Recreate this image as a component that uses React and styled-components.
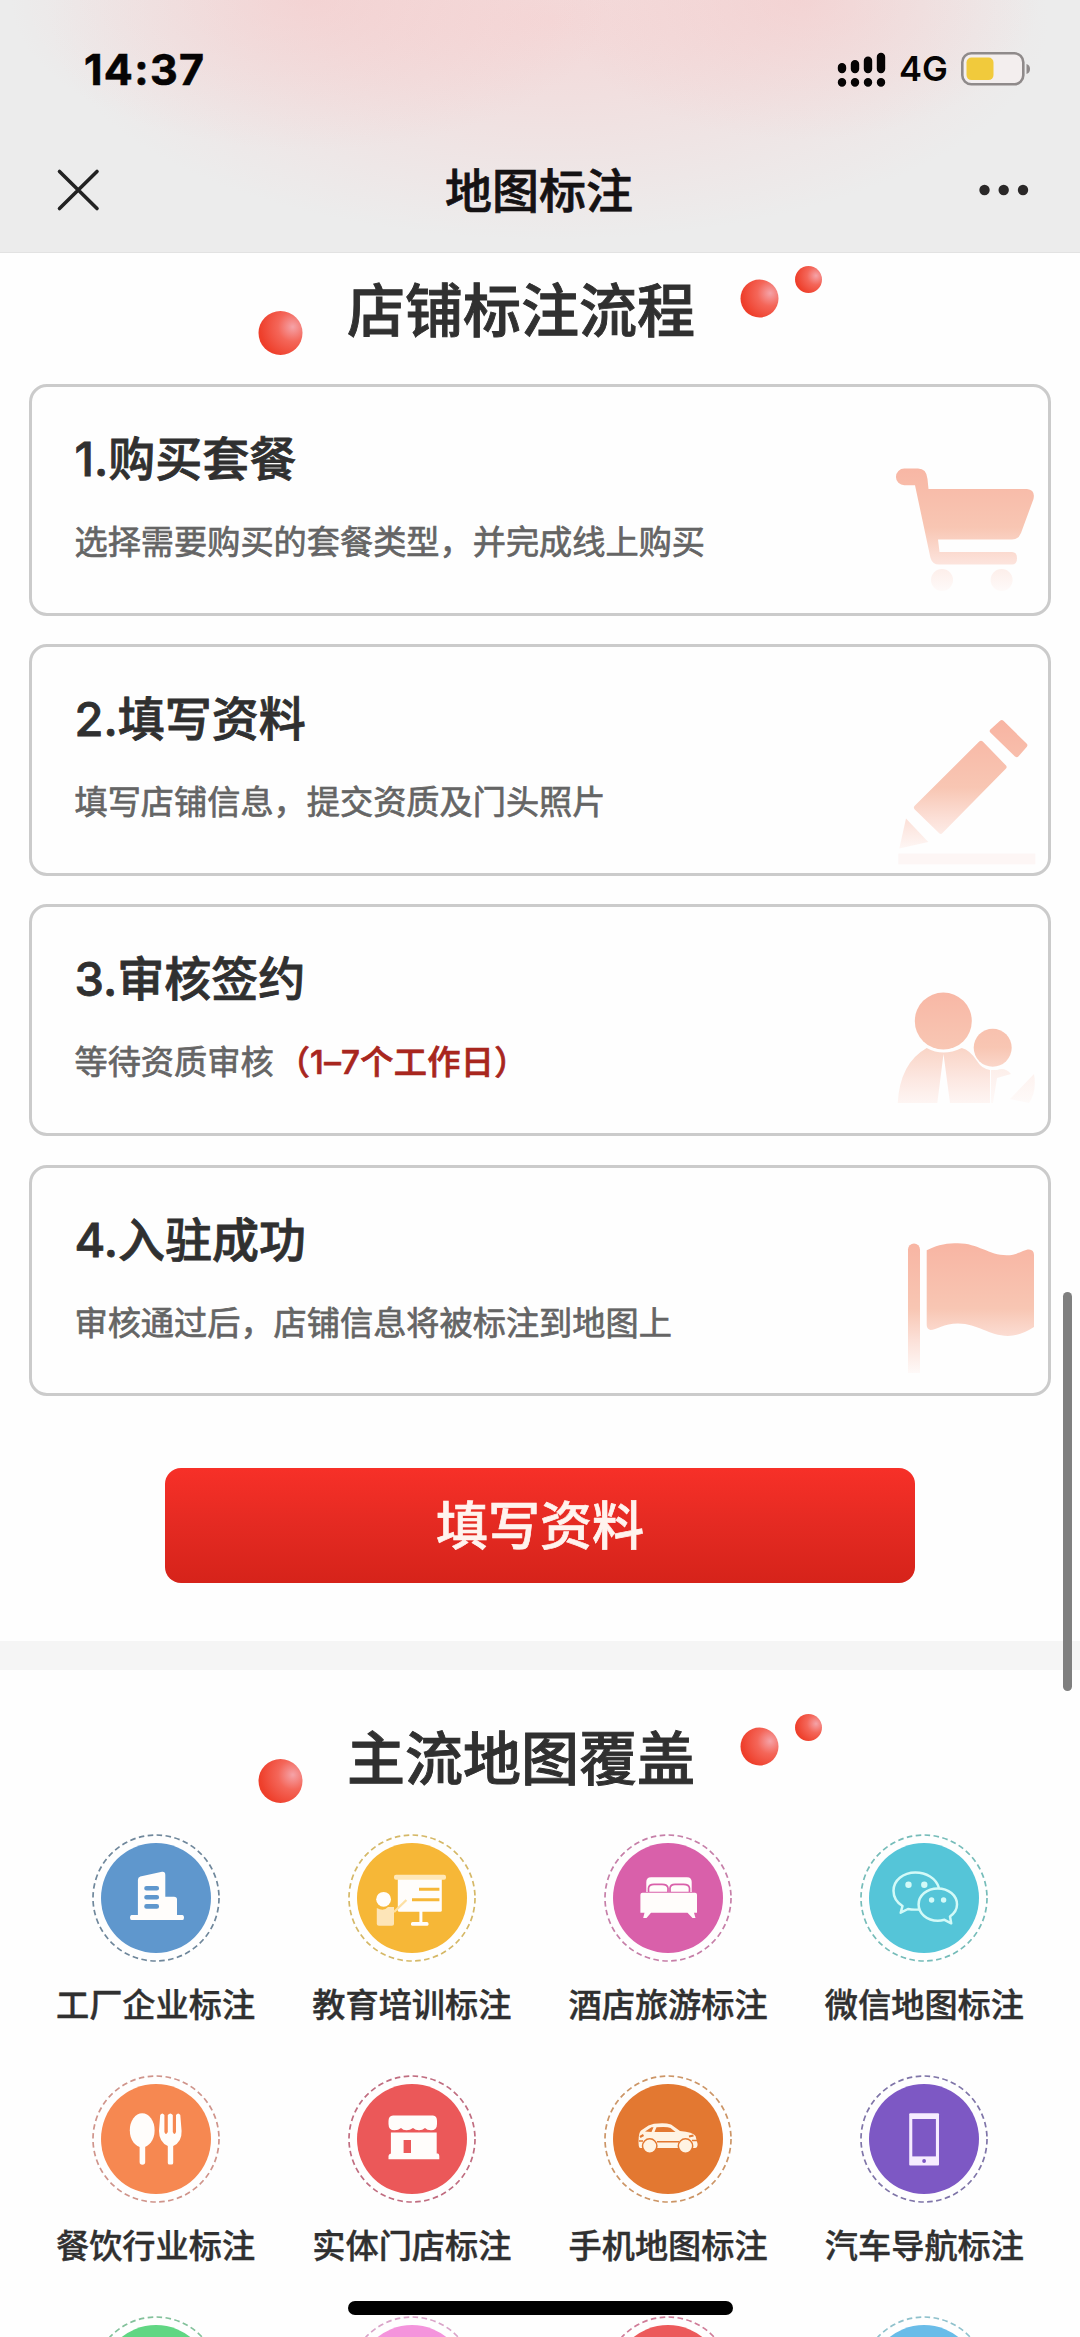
import React from 'react';
import styled, { createGlobalStyle } from 'styled-components';

const GlobalStyle = createGlobalStyle`
  * {
    box-sizing: border-box;
  }

  body {
    margin: 0;
    background: #fefefe;
    font-family: Inter, 'Noto Sans CJK SC', sans-serif;
    font-weight: 500;
    color: #303030;
  }
`;

const Page = styled.div`
  position: relative;
  width: 1080px;
  height: 2337px;
  overflow: hidden;
`;

const Header = styled.header`
  height: 253px;
  border-bottom: 1px solid #e2e2e2;
  background:
    radial-gradient(ellipse 300px 150px at 310px 0, rgba(248, 190, 190, 0.4), transparent),
    radial-gradient(ellipse 240px 140px at 800px 0, rgba(248, 190, 190, 0.4), transparent),
    radial-gradient(ellipse 500px 220px at 550px 20px, rgba(248, 205, 205, 0.65), transparent),
    #ececec;
`;

const StatusBar = styled.div`
  display: flex;
  align-items: center;
  justify-content: space-between;
  height: 137px;
  padding: 0 49px 0 84px;
  color: #060404;
`;

const Time = styled.span`
  font-size: 43px;
  font-weight: 700;
  line-height: 50px;
  letter-spacing: 1.3px;
  -webkit-text-stroke: 0.6px currentColor;
`;

const StatusIcons = styled.div`
  display: flex;
  align-items: center;
  gap: 12px;
`;

const Network = styled.span`
  width: 50px;
  font-size: 34.5px;
  font-weight: 600;
  line-height: 40px;
`;

const NavBar = styled.nav`
  display: grid;
  grid-template-columns: 60px 1fr 60px;
  align-items: center;
  height: 106px;
  padding: 0 47px 0 48px;

  svg:last-child {
    justify-self: end;
  }
`;

const NavTitle = styled.h1`
  margin: 1px 3px 0 0;
  font-size: 47px;
  font-weight: 500;
  line-height: 60px;
  text-align: center;
  color: #151213;
  -webkit-text-stroke: 0.7px currentColor;
`;

const Section = styled.section`
  padding-top: ${({ top }) => top}px;
`;

const TitleRow = styled.div`
  display: flex;
  align-items: flex-start;
  gap: 41px;
  height: 118px;
  padding-left: 258px;
`;

const LeftBall = styled.svg`
  margin-top: 45px;
`;

const SectionTitle = styled.h2`
  margin: 6px 0 0;
  width: 352px;
  font-size: 58px;
  font-weight: 500;
  line-height: 78px;
  text-align: center;
  white-space: nowrap;
  -webkit-text-stroke: 0.9px currentColor;
`;

const Steps = styled.div`
  display: flex;
  flex-direction: column;
  gap: 28.6px;
  padding: 0 29px;
`;

const StepCard = styled.div`
  display: flex;
  justify-content: space-between;
  height: 231.6px;
  border: 3px solid #cbcbcb;
  border-radius: 18px;

  svg {
    flex: none;
  }
`;

const StepText = styled.div`
  padding: 39px 0 0 42.5px;
`;

const StepTitle = styled.h3`
  margin: 0;
  font-size: 47px;
  font-weight: 500;
  line-height: 66px;
  -webkit-text-stroke: 0.8px currentColor;
`;

const StepDesc = styled.p`
  margin: 26px 0 0;
  font-size: 33.2px;
  font-weight: 400;
  line-height: 48px;
  color: #656565;
  -webkit-text-stroke: 0.7px currentColor;
`;

const Highlight = styled.span`
  margin-left: 3px;
  font-weight: 500;
  letter-spacing: 0.3px;
  color: #a8261e;
`;

const SubmitButton = styled.button`
  display: block;
  width: 750px;
  height: 115px;
  margin: 72px auto 58px;
  padding: 0 0 7px;
  border: 0;
  border-radius: 16px;
  background: linear-gradient(#f73028, #e42a22 50%, #d6231a);
  font-family: inherit;
  font-size: 52px;
  font-weight: 500;
  color: #fff3ee;
  -webkit-text-stroke: 0.7px currentColor;
`;

const Divider = styled.div`
  height: 29px;
  background: #f5f5f5;
`;

const CategoryGrid = styled.div`
  display: grid;
  grid-template-columns: repeat(4, 256.3px);
  grid-auto-rows: 240.8px;
  padding: 2px 0 0 27.4px;
`;

const Category = styled.div`
  display: flex;
  flex-direction: column;
  align-items: center;
`;

const CategoryName = styled.span`
  margin-top: 19px;
  font-size: 33.2px;
  line-height: 48px;
  white-space: nowrap;
  -webkit-text-stroke: 0.4px currentColor;
`;

const ScrollThumb = styled.div`
  position: absolute;
  top: 1292px;
  right: 8px;
  width: 9px;
  height: 399px;
  border-radius: 5px;
  background: #7f7f7f;
`;

const HomeIndicator = styled.div`
  position: absolute;
  bottom: 22px;
  left: 348px;
  width: 385px;
  height: 14px;
  border-radius: 7px;
  background: #000;
`;

const CartIcon = () => (
  <>
    <path d='M16.3 81.6 H30 Q38.5 81.6 39.5 92 L40.5 102 H139 Q147.5 103 145.5 112 L133 146 Q130.5 152.6 124 152.6 H50 L51.5 165 H124 Q129 165 129 171.3 T124 177.6 H51 Q44.5 177.6 42.5 171 L27 98.3 H16.3 A8.3 8.3 0 0 1 16.3 81.6Z' />
    <circle cx='54' cy='193' r='11' opacity='0.7' />
    <circle cx='113.6' cy='193' r='11' opacity='0.7' />
  </>
);

const PencilIcon = () => (
  <>
    <g strokeWidth='5' strokeLinejoin='round' stroke='url(#fade)'>
      <path d='M113.7 75.6 L136.8 98.3 L128.7 107.6 L104.3 84Z' />
      <path d='M93 96.3 L116 120 L52.7 184.3 L28.5 160.6Z' />
    </g>
    <path d='M18 171.6 L40.3 195 L11.3 201.6Z' />
    <rect x='10.3' y='206.6' width='137' height='10.7' fill='#fdf6f5' />
  </>
);

const PeopleIcon = () => (
  <>
    <circle cx='55.3' cy='114' r='28.5' />
    <circle cx='104.7' cy='140.7' r='19' />
    <path
      d='M38.7 141 Q55 150 73.7 141 Q82 143 89 154 Q94 162 102 163 V196 H62 L55.5 147 L49.3 196 H9.7 Q12 156 38.7 141Z'
      opacity='0.75'
    />
    <path d='M109 163 Q117 160 123 167 L109 171 L105 196 H103 V163Z' opacity='0.4' />
    <path d='M146 167 Q149 184 141 196 L122 192 Z' opacity='0.35' />
  </>
);

const FlagIcon = () => (
  <>
    <path d='M20 81.6 A6 6 0 0 1 32 81.6 V205 H20Z' />
    <path d='M38.7 82.3 C51 76 60 75.3 70 75.3 C90 75.3 101 87.3 118.7 87.3 C130 87.3 135 81.6 141 81.6 Q146 82 146 87 V159 Q132 168 120 168 C101 168 90 155.6 70 155.6 C56 155.6 48 162 42.5 162 Q38.7 161 38.7 157Z' />
  </>
);

const FactoryIcon = ({ color }) => (
  <>
    <path d='M45.9 46 Q45.9 43.3 48.3 42.6 L70 37.8 Q73.3 37.4 73.3 41 V62.7 H82 Q85 62.7 85 65.5 V81 H90.5 Q92 81 92 83.5 T90.5 86 H39.5 Q38 86 38 83.5 T39.5 81 H45.9Z' />
    <path
      d='M54.5 54.2 H64.8 M54.5 63.2 H64.8 M54.5 72.4 H64.8'
      stroke={color}
      strokeWidth='4.6'
      strokeLinecap='round'
    />
  </>
);

const TeachIcon = ({ color }) => (
  <>
    <rect x='49.8' y='44' width='44' height='33.7' rx='1.5' />
    <rect x='46' y='40.7' width='52' height='5' rx='2' fill='#ffe8b8' />
    <path d='M71 55.2 H91.4 M64 65.7 H91.4' stroke={color} strokeWidth='3' />
    <path d='M72.9 77 V89' stroke='#fff' strokeWidth='3' />
    <rect x='63' y='88' width='17.5' height='3.7' rx='1.5' />
    <circle cx='35.6' cy='65.3' r='7.4' />
    <path d='M28.8 74 Q35.6 78 40 73 H46 V90 Q46 91.7 44 91.7 H31 Q28.8 91.7 28.8 90Z' fill='#fde5b8' />
    <path d='M46 78 L58.4 66' stroke='#fde0a4' strokeWidth='2.4' />
  </>
);

const BedIcon = ({ color }) => (
  <>
    <path d='M42.3 58 V48 Q42.3 43.3 47 43.3 H83 Q87.7 43.3 87.7 48 V58Z' />
    <g stroke={color} strokeWidth='1.7'>
      <path d='M44.5 58.5 V54 Q45 50.3 50 50.3 H58 Q63.5 50.3 64 54 V58.5Z' />
      <path d='M66 58.5 V54 Q66.5 50.3 71 50.3 H79.5 Q85 50.3 85.5 54 V58.5Z' />
    </g>
    <path d='M38.5 58.7 H91 Q93 58.7 93 60.7 V78.7 H90 L91.5 84 H88.5 L83.5 78.7 H47 L42.5 84 H39.2 L40.5 78.7 H36.4 V60.7 Q36.4 58.7 38.5 58.7Z' />
  </>
);

const WechatIcon = ({ color }) => (
  <g stroke='#d3faf8' strokeWidth='2.5' strokeLinejoin='round'>
    <path
      d='M79 54 C76 44 66 38.5 55.5 38.5 C43 38.5 33.5 46.5 33.5 56.7 C33.5 63 37 68.5 42.5 72 L40.7 78.7 L48 75 Q53 76 59 75.4'
      fill='none'
    />
    <path
      d='M77.8 54.4 C67 54.4 58.6 61.5 58.6 70.5 C58.6 79.5 67 86.8 77.8 86.8 Q81 86.8 84.5 85.8 L91.2 89.3 L90 82.5 Q97 77.5 97 70.5 C97 61.5 88.5 54.4 77.8 54.4Z'
      fill={color}
    />
    <g stroke='none' fill='#d3faf8'>
      <circle cx='48.5' cy='50.7' r='3.2' />
      <circle cx='64.3' cy='50.7' r='3.2' />
      <circle cx='71.6' cy='66' r='2.7' />
      <circle cx='83.6' cy='66' r='2.7' />
    </g>
  </g>
);

const FoodIcon = () => (
  <>
    <ellipse cx='50.2' cy='55.3' rx='12.4' ry='17' />
    <path d='M47.6 68 H53.2 V87 Q53.2 89.7 50.4 89.7 T47.6 87Z' />
    <path d='M67 56 L68.2 40 Q70.3 37 72.4 40 V57 Q73.8 61 75.8 57 V40 Q78.3 37 80.8 40 V57 Q82.5 61 84 57 V40 Q86.2 37 88.3 40 L89.6 56 Q90 67 81.2 71 V88 Q81.2 89.5 79.5 89.5 H77.5 Q75.8 89.5 75.8 88 V71 Q67 67 67 56Z' />
  </>
);

const StoreIcon = ({ color }) => (
  <>
    <path d='M45 40.6 H85 Q89 41 89 46 V49 Q89 55.3 83 55.3 Q79 55.3 77 53 Q74.5 55.3 71 55.3 Q67.5 55.3 65 53 Q62 55.3 58.5 55.3 Q55 55.3 53 53 Q50.5 55.3 46.5 55.3 Q40.5 55.3 40.5 49 V46 Q40.5 41 45 40.6Z' />
    <path d='M42.9 57.6 H88.7 V78.5 H90 Q91.3 79 91.3 81 V84.3 H40.5 V81 Q40.5 79 42.9 78.5Z' />
    <rect x='55.6' y='65' width='7.4' height='13' fill={color} />
  </>
);

const CarIcon = ({ color }) => (
  <g fill='#fff3e3'>
    <path d='M34.6 65 Q34.6 58 37 55.5 L44.5 50.5 L50 48.8 Q61 47.3 67 49.5 L76 56 Q89 57 91.5 61 L93.6 69 Q93.6 73 91 73 H36 Q34.2 72 34.6 65Z' />
    <path d='M41 56.5 L47.5 52.3 H49.5 L47.5 57Z' fill={color} />
    <path d='M50.5 57 L52.5 52.3 Q63 51.3 66.5 53 L71.5 57Z' fill={color} />
    <path d='M35 66 H39 M53 66.8 H75 M88 65.5 H93' stroke={color} strokeWidth='1.6' />
    <path d='M36 62 L39.5 60 M85 61.5 L89.5 60.5' stroke={color} strokeWidth='2.2' />
    <circle cx='45.7' cy='71' r='7.2' stroke={color} strokeWidth='1.5' />
    <circle cx='81.5' cy='71' r='7.2' stroke={color} strokeWidth='1.5' />
  </g>
);

const PhoneIcon = ({ color }) => (
  <g fill='#f6ecff'>
    <rect x='49.2' y='38.3' width='29.8' height='52.2' rx='1' />
    <rect x='52.3' y='44' width='23.6' height='37.4' fill={color} />
    <circle cx='64.1' cy='86' r='1.9' fill={color} />
  </g>
);

const steps = [
  { title: '1.购买套餐', desc: '选择需要购买的套餐类型，并完成线上购买', Icon: CartIcon },
  { title: '2.填写资料', desc: '填写店铺信息，提交资质及门头照片', Icon: PencilIcon },
  {
    title: '3.审核签约',
    desc: '等待资质审核',
    note: '（1–7个工作日）',
    Icon: PeopleIcon,
  },
  { title: '4.入驻成功', desc: '审核通过后，店铺信息将被标注到地图上', Icon: FlagIcon },
];

const categories = [
  { name: '工厂企业标注', color: '#5f97cd', ring: '#6f879b', Icon: FactoryIcon },
  { name: '教育培训标注', color: '#f6b737', ring: '#d5b867', Icon: TeachIcon },
  { name: '酒店旅游标注', color: '#d960aa', ring: '#c67fa8', Icon: BedIcon },
  { name: '微信地图标注', color: '#55c5d8', ring: '#76bcb9', Icon: WechatIcon },
  { name: '餐饮行业标注', color: '#f68851', ring: '#cf948b', Icon: FoodIcon },
  { name: '实体门店标注', color: '#eb5859', ring: '#c06d80', Icon: StoreIcon },
  { name: '手机地图标注', color: '#e37831', ring: '#cc9566', Icon: CarIcon },
  { name: '汽车导航标注', color: '#7d58c4', ring: '#7f75a8', Icon: PhoneIcon },
  { color: '#60d683', ring: '#83c19b' },
  { color: '#f494dc', ring: '#d9a4c8' },
  { color: '#ec5a5b', ring: '#cf7c98' },
  { color: '#69bce8', ring: '#8fc1cc' },
];

const Title = ({ children }) => (
  <TitleRow>
    <LeftBall width='46' height='46'>
      <circle cx='22.5' cy='22' r='22' fill='url(#ball)' />
    </LeftBall>
    <SectionTitle>{children}</SectionTitle>
    <svg width='90' height='60'>
      <circle cx='21.5' cy='32.5' r='19' fill='url(#ball)' />
      <circle cx='70.5' cy='13.5' r='13.5' fill='url(#ball)' />
    </svg>
  </TitleRow>
);

const App = () => {
  return (
    <>
      <GlobalStyle />
      <Page>
        {/* shared gradients */}
        <svg width='0' height='0' style={{ position: 'absolute' }}>
          <defs>
            <radialGradient id='ball' cx='0.78' cy='0.36' r='0.75'>
              <stop offset='0' stopColor='#f5a3a8' />
              <stop offset='0.45' stopColor='#f46659' />
              <stop offset='1' stopColor='#ee3f2b' />
            </radialGradient>
            <linearGradient id='fade' gradientUnits='userSpaceOnUse' x1='0' y1='75' x2='0' y2='206'>
              <stop offset='0' stopColor='#f8b5a3' />
              <stop offset='0.5' stopColor='#f8c6b3' />
              <stop offset='0.75' stopColor='#fce1d9' />
              <stop offset='1' stopColor='#fefaf9' />
            </linearGradient>
          </defs>
        </svg>

        <Header>
          <StatusBar>
            <Time>14:37</Time>
            <StatusIcons>
              <svg width='50' height='36' viewBox='0 0 50 36'>
                <g stroke='#060404' strokeWidth='8.4' strokeLinecap='round'>
                  <path d='M5 16.2 V18 M18 13.2 V18 M31 9.7 V18 M44 6 V18' />
                  <path d='M5 31.2 V31.6 M18 31.2 V31.6 M31 31.2 V31.6 M44 31.2 V31.6' />
                </g>
              </svg>
              <Network>4G</Network>
              <svg width='70' height='36' viewBox='0 0 70 36'>
                <rect x='1.3' y='2.3' width='61' height='31' rx='9' fill='#f3eeee' stroke='#8f8a8a' strokeWidth='2.6' />
                <rect x='5.5' y='6.5' width='27' height='22.6' rx='5' fill='#f1ca3c' />
                <path d='M65.5 13 Q69 14 69 18 T65.5 23Z' fill='#8f8a8a' />
              </svg>
            </StatusIcons>
          </StatusBar>
          <NavBar>
            <svg width='60' height='44'>
              <path d='M11.5 3.5 L49 40.5 M49 3.5 L11.5 40.5' stroke='#222' strokeWidth='3.6' strokeLinecap='round' />
            </svg>
            <NavTitle>地图标注</NavTitle>
            <svg width='54' height='12'>
              <circle cx='5.5' cy='6' r='5.2' fill='#2a2828' />
              <circle cx='24.7' cy='6' r='5.2' fill='#2a2828' />
              <circle cx='44' cy='6' r='5.2' fill='#2a2828' />
            </svg>
          </NavBar>
        </Header>

        <Section top={13}>
          <Title>店铺标注流程</Title>
          <Steps>
            {steps.map(({ title, desc, note, Icon }) => (
              <StepCard key={title}>
                <StepText>
                  <StepTitle>{title}</StepTitle>
                  <StepDesc>
                    {desc}
                    {note && <Highlight>{note}</Highlight>}
                  </StepDesc>
                </StepText>
                <svg width='160' height='225' fill='url(#fade)'>
                  <Icon />
                </svg>
              </StepCard>
            ))}
          </Steps>
          <SubmitButton>填写资料</SubmitButton>
        </Section>

        <Divider />

        <Section top={44}>
          <Title>主流地图覆盖</Title>
          <CategoryGrid>
            {categories.map(({ name, color, ring, Icon }) => (
              <Category key={color}>
                <svg width='128' height='128' fill='#fffdfb'>
                  <circle cx='64' cy='64' r='63' fill='none' stroke={ring} strokeWidth='1.7' strokeDasharray='5.6 3.4' />
                  <circle cx='64' cy='64' r='55' fill={color} />
                  {Icon && <Icon color={color} />}
                </svg>
                {name && <CategoryName>{name}</CategoryName>}
              </Category>
            ))}
          </CategoryGrid>
        </Section>

        <ScrollThumb />
        <HomeIndicator />
      </Page>
    </>
  );
};

export default App;
